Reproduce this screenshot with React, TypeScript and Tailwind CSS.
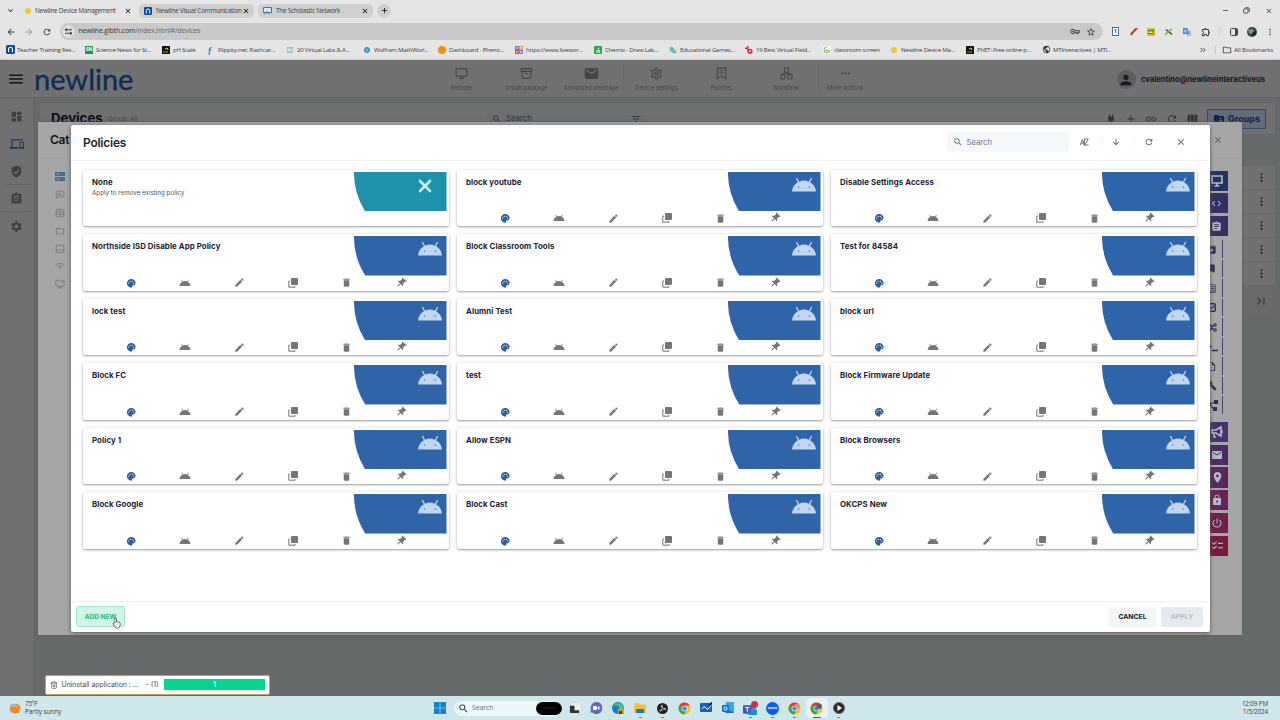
import type { ReactNode } from "react";
import {
  MdDashboard, MdDevices, MdVerifiedUser, MdAssignment, MdSettings, MdPalette, MdEdit, MdDelete, MdPushPin,
  MdClose, MdRefresh, MdAdd, MdLink, MdViewColumn, MdArrowDownward, MdMenu, MdFolderShared, MdMoreVert,
  MdSearch, MdFilterList, MdMoreHoriz, MdMail, MdCode, MdArchive, MdBookmark, MdListAlt,
  MdBuild, MdLocationOn, MdLock, MdPowerSettingsNew, MdChecklist, MdLastPage,
  MdArrowBack, MdArrowForward, MdStarOutline, MdOutlineExtension, MdOutlineFolder, MdKeyboardArrowDown,
  MdOutlineInsertDriveFile, MdPublic, MdFolderOpen, MdPower, MdOutlineVpnKey, MdPerson,
} from "react-icons/md";
import { LuMonitor, LuArchive, LuTrash2, LuMessageSquareText, LuTable, LuPanelBottom, LuWifi, LuMonitorDot, LuSettings } from "react-icons/lu";
import { FaCogs } from "react-icons/fa";

const ui = "font-['Open_Sans','Noto_Sans',sans-serif]";

function AndroidHead({ className }: { className: string }) {
  return (
    <svg viewBox="0 0 24 24" className={className} fill="currentColor">
      <path d="M17.6 9.48l1.84-3.18c.16-.31.04-.69-.26-.85-.29-.15-.65-.06-.83.22l-1.88 3.24a11.43 11.43 0 0 0-8.94 0L5.65 5.67a.643.643 0 0 0-.87-.2c-.28.18-.37.54-.22.83L6.4 9.48A10.78 10.78 0 0 0 1 18h22a10.78 10.78 0 0 0-5.4-8.52z" />
      <circle cx="7" cy="14" r="0.75" fill="#6f86ad" />
      <circle cx="17" cy="14" r="0.75" fill="#6f86ad" />
    </svg>
  );
}

function NewlineBadge({ className }: { className: string }) {
  return (
    <svg viewBox="0 0 16 16" className={className}>
      <rect width="16" height="16" rx="2.5" fill="#0b4a9e" />
      <path d="M4.5 13V7.5a3.5 3.5 0 0 1 7 0V13" fill="none" stroke="#fff" strokeWidth="2" />
    </svg>
  );
}

function WorkflowIcon() {
  return (
    <svg viewBox="0 0 14 14" className="size-[13px]" fill="none" stroke="currentColor" strokeWidth="1.1">
      <rect x="4.8" y="1" width="4.4" height="4.4" />
      <rect x="1" y="8.4" width="4.4" height="4.4" />
      <rect x="8.6" y="8.4" width="4.4" height="4.4" />
      <path d="M7 5.4V7M3.2 8.4V7h7.6v1.4" />
    </svg>
  );
}

function ChromeLogo({ badge }: { badge?: string }) {
  return (
    <svg viewBox="0 0 24 24" className="size-[13px]">
      <circle cx="12" cy="12" r="11" fill="#fbc116" />
      <path d="M12 12L2.5 6.5A11 11 0 0 1 21.5 6.5H12z" fill="#e33b2e" />
      <path d="M12 12L2.5 6.5A11 11 0 0 0 11 23L16.5 14.5z" fill="#2da94f" />
      <circle cx="12" cy="12" r="5.3" fill="#fff" />
      <circle cx="12" cy="12" r="4.2" fill="#4285f4" />
      {badge && <circle cx="17" cy="8" r="5" fill={badge} />}
    </svg>
  );
}

function Tab({ icon, title, tone, width }: { icon: ReactNode; title: string; tone: string; width: string }) {
  return (
    <div className={`flex h-[14px] items-center rounded-[5px] pl-[5px] pr-[4px] ${tone} ${width}`}>
      {icon}
      <span className="ml-1 flex-1 whitespace-nowrap text-[6.4px] tracking-[-0.24px]">{title}</span>
      <MdClose className="size-[8px] text-black" />
    </div>
  );
}

function PhetIcon() {
  return <svg viewBox="0 0 8 8" className="size-[8px]"><path fill="#111" d="M0 0h8v8H0z" /><path d="M1 6h5" stroke="#70a842" /><path d="M3 3l2-1 1 2" stroke="#f1dc42" fill="none" /></svg>;
}

function BrowserChrome() {
  const bookmarks: [string, string, ReactNode][] = [
    ["Teacher Training Res...", "w-[79px]", <NewlineBadge className="size-[9px]" />],
    ["Science News for St...", "w-[77px]", <b className="grid size-[8px] place-items-center bg-[#229b51] text-[5px] text-white">SN</b>],
    ["pH Scale", "w-[45px]", <PhetIcon />],
    ["Flippity.net: Flashcar...", "w-[79px]", <b className="pl-px font-['Lato',sans-serif] text-[10px] italic leading-none text-[#3874e8]">f</b>],
    ["20 Virtual Labs & A...", "w-[77px]", <MdListAlt className="size-[8px] text-[#91b7a4]" />],
    ["Wolfram MathWorl...", "w-[75px]", <i className="ml-px size-[6px] rounded-full border border-[#218998] bg-[#51bdc7]" />],
    ["Dashboard - Pheno...", "w-[77px]", <i className="size-[8px] rounded-full bg-[#ef920e]" />],
    ["https://www.livewor...", "w-[79px]", <svg viewBox="0 0 8 8" className="size-[8px]"><path fill="#5585c5" d="M0 0h4v4H0z" /><path fill="#efa13c" d="M4 0h4v4H4z" /><path fill="#d94e49" d="M0 4h4v4H0z" /><path fill="#638be0" d="M4 4h4v4H4z" /><path d="M2 1v2m3-1h2M1 6h2m2 0h2" stroke="#fff" /></svg>],
    ["Chemix - Draw Lab...", "w-[75px]", <svg viewBox="0 0 8 8" className="size-[8px]"><rect width="8" height="8" rx="1" fill="#22a951" /><path d="M4.4 1.6v1.5L6 6H2.4l1-2" fill="none" stroke="#fff" /></svg>],
    ["Educational Games...", "w-[76px]", <svg viewBox="0 0 8 8" className="size-[8px]"><path d="M1 1l5 6M2.6.8l5 6M.6 3l4 4" stroke="#66b9b4" strokeWidth="1.2" /></svg>],
    ["19 Best Virtual Field...", "w-[78px]", <svg viewBox="0 0 8 8" className="size-[8px]"><path d="M2.8 0v5M0 2.2h3" stroke="#dc2d4e" strokeWidth="1.5" /><circle cx="5" cy="5.3" r="1.8" fill="none" stroke="#dc2d4e" strokeWidth="1.6" /></svg>],
    ["classroom screen", "w-[67px]", <svg viewBox="0 0 8 8" className="size-[8px]"><rect width="8" height="8" fill="#f7fff3" /><circle cx="4" cy="4" r="3" fill="none" stroke="#82c94b" strokeDasharray="14 4" /><path d="M2.5 4.3q1.5 1.5 3 0" stroke="#333" strokeWidth=".7" fill="none" /></svg>],
    ["Newline Device Ma...", "w-[76px]", <i className="ml-px size-[6px] rounded-full bg-[#f2c72f]" />],
    ["PhET: Free online p...", "w-[76px]", <PhetIcon />],
    ["MTInteractives | MTI...", "w-[76px]", <MdPublic className="size-[9px] text-[#333]" />],
  ];
  return (
    <div className={`flex h-[60px] flex-col bg-[#e5e5e5] text-[#3c3c3c] ${ui}`}>
      <div className="flex h-[21px] items-center pl-[6px]">
        <MdKeyboardArrowDown className="size-[9px] text-black" />
        <Tab icon={<i className="size-[6px] rounded-full bg-[#f2c72f]" />} title="Newline Device Management" tone="" width="ml-[5px] w-[116px]" />
        <Tab icon={<NewlineBadge className="size-[8px]" />} title="Newline Visual Communication" tone="bg-[#d0d0d0]" width="ml-[3px] w-[115px]" />
        <Tab
          icon={<svg viewBox="0 0 9 8" className="h-2 w-[9px]"><path d="M.5.5h8v5h-8z" fill="#d5edf0" stroke="#397d98" /><path d="M1 7.5l3-3 3 3" fill="none" stroke="#397d98" /></svg>}
          title="The Scholastic Network" tone="bg-[#d0d0d0]" width="ml-[4px] w-[115px]"
        />
        <div className="ml-[4px] grid size-[14px] place-items-center rounded-full bg-[#cfcfcf] text-black"><MdAdd className="size-[9px]" /></div>
        <div className="ml-auto flex items-center gap-[15px] pr-[7px] text-[#444]">
          <i className="h-px w-[5px] bg-[#666]" />
          <svg viewBox="0 0 8 8" className="size-[7px]" fill="none" stroke="currentColor"><rect x=".8" y="2" width="5" height="5" rx="1" /><path d="M2.5.8h3.2q1.5 0 1.5 1.5v3.2" /></svg>
          <MdClose className="size-[8px]" />
        </div>
      </div>
      <div className="flex h-[20px] items-center pl-[6px] pt-px text-[#333]">
        <MdArrowBack className="size-[10px]" />
        <MdArrowForward className="ml-[8px] size-[10px] text-[#999]" />
        <MdRefresh className="ml-[8px] size-[10px]" />
        <div className="ml-[8px] flex h-[17px] w-[1043px] items-center rounded-full bg-[#c9c9c9] pl-[2px] pr-[7px]">
          <div className="grid size-[13px] place-items-center rounded-full bg-[#dedede]">
            <svg viewBox="0 0 8 8" className="size-[7px]" stroke="#333" fill="none"><path d="M3 2h5M0 6h5" /><circle cx="1.5" cy="2" r="1" fill="#333" /><circle cx="6.5" cy="6" r="1" fill="#333" /></svg>
          </div>
          <span className="ml-[3.5px] flex-1 text-[7px] tracking-[-0.18px] text-[#666]"><span className="text-[#333]">newline.glbth.com</span>/index.html#/devices</span>
          <svg viewBox="0 0 12 8" className="mr-[6px] h-[7px] w-[10px]" fill="none" stroke="currentColor" strokeWidth="1.1"><circle cx="3.5" cy="4" r="2.7" /><circle cx="3.5" cy="4" r=".6" /><path d="M6.2 3h5v2.200h-1.400v1.500H8.400V5.200H6.200" /></svg>
          <MdStarOutline className="size-[10px]" />
        </div>
        <div className="ml-[9px] flex flex-1 items-center">
          <span className="flex w-[18px]"><b className="grid h-[9px] w-[7px] place-items-center border border-[#4f6c83] bg-white text-[5px] leading-none">1</b></span>
          <span className="flex w-[17px]"><svg viewBox="0 0 8 8" className="size-[8px]"><path d="M1 7l1-2 5-5" stroke="#c62c24" strokeWidth="2" /></svg></span>
          <span className="flex w-[18px]"><svg viewBox="0 0 8 8" className="size-[8px]"><rect width="8" height="8" rx="1" fill="#dfb323" /><path d="M1 2h6v1.5H1zM1 5h6v1H1z" fill="#348f42" /><path d="M2 3.7h3v1H2z" fill="#fff" /></svg></span>
          <span className="flex w-[18px]"><svg viewBox="0 0 8 8" className="size-[8px]"><path d="M1 1.5l6 5" stroke="#294421" strokeWidth="1.2" /><path d="M0 7l3-3L7 1" stroke="#63b52e" strokeWidth="1.3" fill="none" /></svg></span>
          <span className="flex w-[18px]"><svg viewBox="0 0 8 8" className="size-[8px]"><path d="M3 2.5h5V8H4z" fill="#aabcdd" /><path d="M0 0h4.5L6 6H0z" fill="#4381df" /><path d="M3.6 2.7a1.2 1.2 0 1 0 0 1H2.5" stroke="#fff" strokeWidth=".7" fill="none" /></svg></span>
          <MdOutlineExtension className="size-[10px]" />
          <i className="ml-[8px] h-[9px] w-px bg-[#d0d0d0]" />
          <svg viewBox="0 0 8 8" className="ml-[10px] size-[8px]"><rect x=".5" y=".5" width="7" height="7" rx="1" fill="none" stroke="#444" /><path d="M5 1h2.5v6H5z" fill="#444" /></svg>
          <svg viewBox="0 0 10 10" className="ml-[9px] size-[10px]"><circle cx="5" cy="5" r="5" fill="#36423e" /><path d="M1 2l3 1 1-2 2 3-2 3-3-1z" fill="#82968e" /><path d="M5 6l3-2 1 3-3 2z" fill="#182427" /></svg>
          <MdMoreVert className="ml-[8px] size-[10px]" />
        </div>
      </div>
      <div className="flex h-[18px] items-center pl-[6px] text-[6.1px] tracking-[-0.24px]">
        {bookmarks.map(([label, width, icon]) => (
          <div key={label} className={`flex shrink-0 items-center ${width}`}>
            <span className="flex w-[11px] items-center">{icon}</span>
            <span className="whitespace-nowrap">{label}</span>
          </div>
        ))}
        <svg viewBox="0 0 6 6" className="ml-[82px] size-[6px]" fill="none" stroke="#444" strokeWidth=".9"><path d="M.5 1l2 2-2 2M3.2 1l2 2-2 2" /></svg>
        <i className="ml-[9px] h-[8px] w-px bg-[#c9c9c9]" />
        <MdOutlineFolder className="ml-[6px] size-[10px]" />
        <span className="ml-[2px] whitespace-nowrap tracking-[-0.12px]">All Bookmarks</span>
      </div>
    </div>
  );
}

function AppHeader() {
  const items: [string, ReactNode][] = [
    ["Remote", <LuMonitor />],
    ["Install package", <LuArchive />],
    ["Advanced message", <MdMail className="scale-125" />],
    ["Device settings", <LuSettings />],
    ["Policies", <svg viewBox="0 0 24 24" fill="none" stroke="currentColor" strokeWidth="2" className="size-[13px]"><path d="M4 2h16v20l-8-6-8 6zM8 7h8M8 11h8" /></svg>],
    ["Workflow", <WorkflowIcon />],
    ["More actions", <MdMoreHoriz />],
  ];
  return (
    <header className="flex h-[38px] shrink-0 items-center border-b border-[#656565] bg-[#717171] pt-px shadow-[0_1px_3px_#5d5d5d]">
      <MdMenu className="ml-[7px] size-[18px] text-[#11131c]" />
      <span className="ml-[9px] w-[395px] pb-[1px] font-['Lato',sans-serif] text-[29px] leading-none text-[#0e2f55] [-webkit-text-stroke:0.4px_#0e2f55]">newline</span>
      {items.map(([label, icon], i) => (
        <div key={label} className={`flex h-[28px] flex-col items-center gap-[4px] pt-[2px] text-[13px] text-[#454545] ${i === 6 ? "w-[52px]" : "w-[65px]"} ${i === 2 || i === 5 ? "border-r border-[#696969]" : ""}`}>
          {icon}
          <span className="whitespace-nowrap text-[5.9px] leading-[7px]">{label}</span>
        </div>
      ))}
      <div className="ml-auto flex items-center pr-[15px] pt-px">
        <span className="mr-[5px] grid size-[19px] place-items-center rounded-full bg-[#5d5d5d] text-[#171b26]"><MdPerson className="size-[16px]" /></span>
        <span className="text-[7.6px] font-bold text-[#111621]">cvalentino@newlineinteractiveus</span>
      </div>
    </header>
  );
}

function SideNav() {
  return (
    <nav className="flex w-[34px] flex-col items-center border-r border-[#676767] bg-[#707070] pt-[5px] text-[#3e3e3e]">
      <span className="grid h-[27px] w-7 place-items-center"><MdDashboard className="size-[13px]" /></span>
      <span className="grid h-[28px] w-7 place-items-center text-[#24365f]"><MdDevices className="size-[14px]" /></span>
      <span className="grid h-[27px] w-7 place-items-center border-b border-[#656565]"><MdVerifiedUser className="size-[13px]" /></span>
      <span className="grid h-[27px] w-7 place-items-center border-b border-[#656565]"><MdAssignment className="size-[13px]" /></span>
      <span className="grid h-[28px] w-7 place-items-center"><MdSettings className="size-[13px]" /></span>
    </nav>
  );
}

function DevicesPage() {
  return (
    <main className="flex flex-1 flex-col bg-[#676a6b] pl-[6px] pr-[5px] pt-[5px]">
      <div className="flex h-[31px] items-center bg-[#717171] pl-[11px] pr-[9px] text-[#343434]">
        <b className="w-[51px] text-[13.2px] font-bold text-[#0b0d14]">Devices</b>
        <span className="ml-[6px] w-[377px] pt-[2px] text-[6.3px] text-[#444]">Group: All</span>
        <div className="flex h-[15px] w-[161px] items-center rounded bg-[#6c7072] pl-[7px] pr-[4px]">
          <MdSearch className="size-[10px]" /><span className="ml-[4px] flex-1 text-[7.8px]">Search</span><MdFilterList className="size-[12px]" />
        </div>
        <div className="ml-auto flex items-center gap-[8.2px]">
          <MdPower className="size-[12px]" /><MdAdd className="size-[12px]" /><MdLink className="size-[12px]" /><MdRefresh className="size-[12px]" /><MdViewColumn className="size-[13px]" />
          <div className="flex h-[20px] w-[59px] items-center justify-center gap-[3px] border border-[#394a68] bg-[#626b79] text-[#102347]">
            <MdFolderShared className="size-[12px]" /><b className="text-[9px]">Groups</b>
          </div>
        </div>
      </div>
      <div className="mt-[32px] flex flex-col text-[#222]">
        {[0, 1, 2, 3, 4].map((row) => (
          <div key={row} className="flex h-[24px] items-center justify-end border-b border-[#696969] bg-[#717171] pr-[7px]"><MdMoreVert className="size-[13px]" /></div>
        ))}
        <div className="flex h-[29px] items-center justify-end bg-[#696b6b] pr-[7px]"><MdLastPage className="size-[14px] text-[#333]" /></div>
      </div>
    </main>
  );
}

function CategoryDialog() {
  const solidTop: [string, ReactNode][] = [
    ["bg-[#253264]", <svg viewBox="0 0 12 12" className="size-[12px]"><path d="M1 1h10v7H1zM6 8v2.5M3.5 11h5" fill="none" stroke="currentColor" strokeWidth="1.6" /></svg>],
    ["bg-[#333164]", <MdCode className="size-[11px]" />],
    ["bg-[#39315f]", <MdAssignment className="size-[11px]" />],
  ];
  const links = [
    <MdArchive />, <MdBookmark />, <MdListAlt />,
    <svg viewBox="0 0 12 12" className="size-[11px]"><rect x="1" y="2" width="9" height="8" rx="1" fill="none" stroke="currentColor" strokeWidth="1.6" /><path d="M3 5l3 2 3-3" fill="none" stroke="currentColor" strokeWidth="1.4" /></svg>,
    <FaCogs />,
    <svg viewBox="0 0 12 12" className="size-[12px]"><path d="M1 2l4 3.5L1 9M5.5 9.5H12" fill="none" stroke="currentColor" strokeWidth="1.6" /></svg>,
    <MdOutlineInsertDriveFile />, <MdBuild />,
    <svg viewBox="0 0 12 12" className="size-[12px]"><path d="M1 3h4v4H1zM8 1h4v4H8zM7 8h4v4H7z" fill="currentColor" /><path d="M3 5l7-2M3 5l5 5" stroke="currentColor" strokeWidth="1.2" /></svg>,
  ];
  const solidBottom: [string, ReactNode][] = [
    ["bg-[#473369]", <svg viewBox="0 0 12 12" className="size-[12px]"><path d="M1 4h4l5-3v9L5 7H1zM3 7v4h2" fill="none" stroke="currentColor" strokeWidth="1.6" /><path d="M11 4v3" stroke="currentColor" strokeWidth="1.4" /></svg>],
    ["bg-[#4c2d63]", <MdMail className="size-[12px]" />],
    ["bg-[#57295f]", <MdLocationOn className="size-[13px]" />],
    ["bg-[#662555]", <MdLock className="size-[12px]" />],
    ["bg-[#702048]", <MdPowerSettingsNew className="size-[12px]" />],
    ["bg-[#781a40]", <MdChecklist className="size-[13px]" />],
  ];
  return (
    <section className="absolute left-[38px] top-[62px] flex h-[513px] w-[1204px] flex-col bg-[#a6a6a6] shadow-[0_0_3px_#555]">
      <div className="flex h-[37px] items-center justify-between border-b border-[#a0a0a0] pl-[12px] pr-[19px]">
        <b className="text-[12px] font-semibold tracking-[-0.3px] text-[#11131c]">Cat</b><MdClose className="size-[10px] text-[#555]" />
      </div>
      <div className="flex flex-1 justify-between">
        <div className="flex w-[32px] flex-col items-center pl-[11px] pt-[9px] text-[10px] text-[#777]">
          {[<svg viewBox="0 0 10 9" className="h-[9px] w-[10px]" fill="#416e8d"><path d="M0 0h10v4H0zM0 5h10v4H0z" /><path d="M1.5 1.5h3v1h-3zM1.5 6.5h3v1h-3z" fill="#9fb0ba" /></svg>, <LuMessageSquareText />, <LuTable />, <MdFolderOpen />, <LuPanelBottom />, <LuWifi />, <LuMonitorDot />].map((icon, i) => (
            <span key={i} className="grid h-[17.9px] place-items-center">{icon}</span>
          ))}
        </div>
        <div className="flex w-[36px] flex-col pt-[11.5px] text-[#b8b8c2]">
          {solidTop.map(([tone, icon], i) => (
            <span key={i} className={`mb-[2.6px] flex h-[20.2px] w-[22px] items-center pl-[5px] ${tone}`}>{icon}</span>
          ))}
          <div className="mt-[1.5px] flex flex-col text-[11px] text-[#302c5c]">
            {links.map((icon, i) => (
              <span key={i} className="mb-[2px] flex h-[17.5px] w-[17px] items-center border-r border-[#47416d]">{icon}</span>
            ))}
          </div>
          <div className="mt-[6px]">
            {solidBottom.map(([tone, icon], i) => (
              <span key={i} className={`mb-[2.6px] flex h-[20.2px] w-[22px] items-center pl-[5px] ${tone}`}>{icon}</span>
            ))}
          </div>
        </div>
      </div>
    </section>
  );
}

function PolicyCard({ name }: { name: string }) {
  const none = name === "None";
  return (
    <article className="h-[56.5px] rounded-[2px] bg-white shadow-[0_1px_2px_rgba(0,0,0,0.35),0_0_4px_rgba(0,0,0,0.10)]">
      <div className="flex h-[42px] justify-between pl-[9px] pr-[2.5px] pt-[2px]">
        <div className="pt-[5px]">
          <h3 className="text-[7.8px] font-bold leading-[10px] tracking-[0.1px] text-[#1b2234]">{name}</h3>
          {none && <p className="mt-[2.5px] text-[6.25px] leading-[9px] text-[#4c5566]">Apply to remove existing policy</p>}
        </div>
        <div className="relative h-[39.5px] w-[92.5px]">
          <svg viewBox="0 0 92.5 39.5" className={`size-full ${none ? "text-[#1e92ab]" : "text-[#2f64a9]"}`}>
            <path d="M0 0H92.5V39.5H11.2Q-.4 21 0 0z" fill="currentColor" />
          </svg>
          {none ? (
            <svg viewBox="0 0 14 14" className="absolute left-[64px] top-[7.5px] size-[14px]"><path d="M2 2l10 10M12 2L2 12" stroke="#c9eef2" strokeWidth="2.6" strokeLinecap="round" /></svg>
          ) : (
            <AndroidHead className="absolute left-[63px] top-0 size-[26px] text-[#c3d6f1]" />
          )}
        </div>
      </div>
      {!none && (
        <div className="flex h-[13.5px] items-center pl-[21px] text-[#757575] *:flex *:w-[54px] *:justify-center">
          <span className="text-[#2f5c9c]"><MdPalette className="size-[10.5px]" /></span>
          <span><AndroidHead className="size-[12px]" /></span>
          <span><MdEdit className="size-[11px]" /></span>
          <span><svg viewBox="0 0 10 10" className="size-[10px]"><rect x="3" y="0" width="7" height="7" rx="1" fill="currentColor" /><path d="M2 3H.8v6.2H7V8" fill="none" stroke="currentColor" /></svg></span>
          <span className="pr-px"><MdDelete className="size-[11px]" /></span>
          <span className="pr-px"><MdPushPin className="size-[12px] rotate-45" /></span>
        </div>
      )}
    </article>
  );
}

const policies = [
  "None", "block youtube", "Disable Settings Access", "Northside ISD Disable App Policy", "Block Classroom Tools", "Test for 84584",
  "lock test", "Alumni Test", "block url", "Block FC", "test", "Block Firmware Update",
  "Policy 1", "Allow ESPN", "Block Browsers", "Block Google", "Block Cast", "OKCPS New",
];

function PoliciesDialog() {
  return (
    <section className="absolute left-[70.5px] top-[64.5px] flex h-[507.5px] w-[1139px] flex-col rounded-[2px] bg-white shadow-[0_1px_4px_#555]">
      <div className="flex h-[36.5px] shrink-0 items-center border-b border-[#f0f0f0] pl-[12.5px] text-[#555]">
        <h2 className="pt-px text-[11.9px] font-semibold tracking-[-0.2px] text-[#1b2234]">Policies</h2>
        <div className="ml-auto flex h-[20px] w-[122px] items-center rounded-[4px] bg-[#f4f8fb] pl-[5.5px]">
          <MdSearch className="size-[10px] text-[#59677c]" /><span className="ml-[4px] pt-px text-[7.7px] text-[#66758c]">Search</span>
        </div>
        <div className="flex w-[34px] justify-center border-r border-[#f2f2f2] pr-[3px]">
          <svg viewBox="0 0 9 8" className="h-2 w-[9px]" fill="none" stroke="currentColor" strokeWidth=".8"><path d="M.3 7L2.4 1.4 4.5 7M1 5.2h2.8M5 1h3.3L5 7h3.6M4.8 0L4 8" /></svg>
        </div>
        <div className="flex w-[32px] justify-center border-r border-[#f2f2f2] pr-[5px]"><MdArrowDownward className="size-[10px]" /></div>
        <div className="flex w-[32px] justify-center pr-[5px]"><MdRefresh className="size-[10px]" /></div>
        <div className="mr-[10.5px] flex w-[32px] justify-center pr-[4px]"><MdClose className="size-[10px]" /></div>
      </div>
      <div className="grid grid-cols-[366px_366px_366px] content-start gap-[8px] px-[12.5px] pt-[8.5px]">
        {policies.map((name) => <PolicyCard key={name} name={name} />)}
      </div>
      <div className="mt-auto flex h-[31.5px] shrink-0 items-center border-t border-[#f0f0f0] pl-[5.5px] pr-[6.5px] text-[6.5px] font-bold *:pt-px">
        <button className="relative h-[21px] w-[49px] rounded-[3px] border border-[#a4e6cc] bg-[#d2f3e6] text-[#18bd84]">
          <span className="block pt-px">ADD NEW</span>
          <svg viewBox="0 0 16 20" className="absolute left-[35px] top-[10px] h-[12px] w-[9px]"><path d="M5 10V3q0-2 1.5-2T8 3v5q2-1 2 .5 2-1 2 .7 2-.7 2.5 1V14q-1 5-4.5 5H7L2 12q-1-2 1-2z" fill="#fff" stroke="#333" strokeWidth="1.3" /></svg>
        </button>
        <button className="ml-auto h-[20px] w-[47px] rounded-[2px] bg-[#f3f6f8] text-[6.8px] text-[#111827]">CANCEL</button>
        <button className="ml-[5px] h-[20px] w-[42px] rounded-[2px] bg-[#e5eaee] text-[6.8px] tracking-[0.1px] text-[#b9c0c7]">APPLY</button>
      </div>
    </section>
  );
}

function TaskToast() {
  return (
    <div className="absolute left-[45px] top-[614.5px] flex h-[20px] w-[225px] items-center rounded-[2px] border border-[#c89e56] bg-white pl-[4px] pr-[4px] text-[7px] text-[#4a505c]">
      <LuTrash2 className="size-[8px]" />
      <span className="ml-[3.5px] w-[84px] whitespace-nowrap pt-px tracking-[-0.06px]">Uninstall application : ...</span>
      <span className="pt-px">- (1)</span>
      <b className="ml-auto grid h-[11px] w-[101px] place-items-center bg-[#05d38e] text-[7px] leading-none text-white">1</b>
    </div>
  );
}

function Taskbar() {
  const apps: [ReactNode, string][] = [
    [<svg viewBox="0 0 12 12" className="size-[11px]"><path d="M4 0h8v8H4z" fill="#ededed" /><path d="M1 3h5v5h5v3H1z" fill="#333" /></svg>, ""],
    [<svg viewBox="0 0 12 12" className="size-[12px]"><path d="M6 0a6 6 0 1 1-4 10L0 11l1-3A6 6 0 0 1 6 0z" fill="#6565c2" /><rect x="3" y="4" width="4" height="4" rx="1" fill="#fff" /><path d="M7.5 5.5L9.5 4v4L7.5 6.5" fill="#fff" /></svg>, ""],
    [<svg viewBox="0 0 12 12" className="size-[12px]"><circle cx="6" cy="6" r="6" fill="#1680cf" /><path d="M1 4a6 6 0 0 1 11 2c0 3-4 3-5 1 1-4-4-4-6-3z" fill="#4cc57b" /><path d="M6 7h6v5H6z" fill="#cf9d42" /><path d="M7 9h3v3H7z" fill="#3c3c2e" /></svg>, ""],
    [<svg viewBox="0 0 12 12" className="size-[12px]"><path d="M0 1h5l1 1.5h6V11H0z" fill="#f4c13c" /><path d="M2 7h8v4H2z" fill="#1d79b8" /></svg>, "bg-[#69767b]"],
    [<svg viewBox="0 0 12 12" className="size-[11px]"><circle cx="6" cy="6" r="6" fill="#222" /><path d="M6 5Q4.5 4 5.5 2.5M6.8 6.5Q8.5 5.6 9.3 7M5.2 6.8Q5 8.6 3.3 8.3" stroke="#ccc" strokeWidth="1.3" strokeLinecap="round" fill="none" /></svg>, "bg-[#69767b]"],
    [<ChromeLogo />, ""],
    [<svg viewBox="0 0 12 12" className="size-[12px]"><rect y="1" width="12" height="9" rx="1" fill="#155fc1" /><path d="M2 7q2-4 4-1t5-3" stroke="#fff" fill="none" /><path d="M9 4l3-4" stroke="#222" strokeWidth="1.5" /></svg>, ""],
    [<svg viewBox="0 0 12 12" className="size-[12px]"><path d="M4 0h8v11H3z" fill="#35a5e6" /><path d="M4 6l8 5H4z" fill="#1768b4" /><rect y="3" width="7" height="7" rx="1" fill="#1670c3" /><circle cx="3.5" cy="6.5" r="1.6" fill="none" stroke="#fff" /></svg>, ""],
    [<svg viewBox="0 0 14 14" className="size-[15px]"><circle cx="9" cy="6" r="3" fill="#7378d4" /><rect x="0" y="4" width="8" height="8" rx="1" fill="#4854b5" /><path d="M2 6h4M4 6v4" stroke="#fff" /><path d="M8 8h5v5H5v-2z" fill="#1793b7" /><circle cx="10.8" cy="3.2" r="3.2" fill="#d52b38" /></svg>, "bg-[#69767b]"],
    [<span className="grid size-[13px] place-items-center rounded-full bg-[#0b5cff] text-[3.5px] font-bold text-white">zoom</span>, "bg-[#69767b]"],
    [<ChromeLogo badge="#d99b7c" />, "bg-[#69767b]"],
    [<ChromeLogo badge="#50665d" />, "bg-[#2d6472]"],
    [<svg viewBox="0 0 12 12" className="size-[12px]"><circle cx="6" cy="6" r="5.5" fill="#2b2b2b" stroke="#795a61" /><path d="M4.5 3l4.5 3-4.5 3z" fill="#fff" /></svg>, "bg-[#69767b]"],
  ];
  return (
    <footer className={`flex h-[24px] items-center bg-[#cfe6eb] text-[6.4px] text-[#394247] ${ui}`}>
      <svg viewBox="0 0 14 14" className="ml-[9px] size-[13px]"><circle cx="7.5" cy="7" r="5" fill="#ee9428" /><path d="M1 4q3-3 5 0l5 6q1 2-2 2H5Q2 12 1 9z" fill="#e48a27" /><path d="M1 5q0-2 2-2 2-3 4 0 2 0 2 2z" fill="#a9bac8" /></svg>
      <div className="ml-[3px] w-[409px] leading-[8px] tracking-[-0.24px]"><div>75°F</div><div className="tracking-[-0.04px]">Partly sunny</div></div>
      <svg viewBox="0 0 12 12" className="size-[12px]"><path d="M0 0h5.7v5.7H0zM6.3 0H12v5.7H6.3zM0 6.3h5.7V12H0zM6.3 6.3H12V12H6.3z" fill="#1580cc" /></svg>
      <div className="ml-[8px] flex h-[15px] w-[108px] items-center rounded-full bg-[#edf7f9] pl-[4px]">
        <MdSearch className="size-[11px] text-[#222]" /><span className="ml-[3px] flex-1 text-[7px] tracking-[-0.1px] text-[#667278]">Search</span>
        <span className="grid h-[13px] w-[26px] place-items-center rounded-full bg-black text-[3.5px] text-[#344255]">newline</span>
      </div>
      <div className="ml-px flex">
        {apps.map(([icon, mark], i) => (
          <div key={i} className={`relative grid h-[20px] w-[22.05px] place-items-center ${i === 11 ? "rounded bg-[#e6f2f4]" : ""}`}>
            {icon}
            {mark && <i className={`absolute bottom-0 h-[1.5px] rounded-full ${i === 11 ? "w-[8px]" : "w-[3px]"} ${mark}`} />}
          </div>
        ))}
      </div>
      <div className="ml-auto pr-[12px] text-right leading-[8px] tracking-[-0.18px]"><div>12:09 PM</div><div>1/5/2024</div></div>
    </footer>
  );
}

export default function App() {
  return (
    <div className="flex h-[720px] w-[1280px] flex-col overflow-hidden font-['Inter','Roboto',sans-serif]">
      <BrowserChrome />
      <div className="relative flex flex-1 flex-col">
        <AppHeader />
        <div className="flex flex-1"><SideNav /><DevicesPage /></div>
        <CategoryDialog />
        <PoliciesDialog />
        <TaskToast />
      </div>
      <Taskbar />
    </div>
  );
}
